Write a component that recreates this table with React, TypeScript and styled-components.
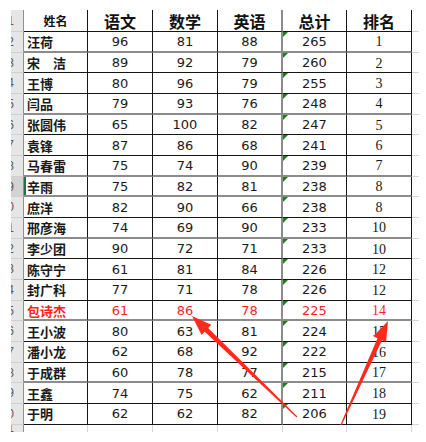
import React from 'react';
import styled, { createGlobalStyle, css } from 'styled-components';

const Global = createGlobalStyle`
  html, body { margin: 0; padding: 0; background: #fff; }
  body { width: 426px; height: 442px; overflow: hidden; }
`;

type Line = 'dark' | 'gray';

const Page = styled.div`
  position: relative;
  width: 426px;
  height: 442px;
  box-sizing: border-box;
  padding: 10px 0 0 11px;
  background: #fff;
`;

const Sheet = styled.div`
  display: grid;
  grid-template-columns: 13px 64px 65px 65px 65px 64px 65px 7px;
  grid-template-rows: 22px repeat(19, 20.68px) 7px;
`;

const RowHead = styled.div<{ $sel?: boolean; $last?: boolean }>`
  display: flex;
  align-items: center;
  justify-content: flex-end;
  overflow: hidden;
  box-sizing: border-box;
  padding-right: 9px;
  background: ${p => (p.$sel ? '#d3d3d3' : '#e6e6e6')};
  border-right: 1px solid #8f8f8f;
  border-bottom: ${p => (p.$last ? 'none' : '1px solid #cfcfcf')};
  font-family: "Liberation Sans", sans-serif;
  font-size: 12px;
  color: #5a5a5a;
  white-space: nowrap;
`;

const Cell = styled.div<{ $line: Line; $vline?: Line; $red?: boolean }>`
  position: relative;
  display: flex;
  align-items: center;
  justify-content: center;
  box-sizing: border-box;
  border-bottom: ${p => (p.$line === 'gray' ? '2px solid #8c8c8c' : '1px solid #161616')};
  border-right: ${p => (p.$vline === 'gray' ? '2px solid #8c8c8c' : '1px solid #161616')};
  color: ${p => (p.$red ? '#ff1f1f' : '#1a1a1a')};
  font-family: "DejaVu Sans", sans-serif;
  font-size: 13px;
  white-space: nowrap;
`;

const HeadCell = styled(Cell)<{ $small?: boolean }>`
  font-family: "Noto Sans CJK SC", sans-serif;
  font-weight: 700;
  font-size: ${p => (p.$small ? '12px' : '16px')};
  color: #111;
`;

const NameCell = styled(Cell)<{ $sel?: boolean }>`
  justify-content: flex-start;
  padding-left: 3px;
  font-family: "Noto Sans CJK SC", sans-serif;
  font-weight: 700;
  font-size: 13px;
  ${p =>
    p.$sel &&
    css`
      box-shadow: inset 2px 0 0 #217346;
    `}
`;

const TotalCell = styled(Cell)`
  &::before {
    content: '';
    position: absolute;
    top: 0;
    left: 0;
    border-top: 5px solid #1b7f1b;
    border-right: 5px solid transparent;
  }
`;

const RankCell = styled(Cell)`
  font-family: "Liberation Serif", serif;
  font-size: 14px;
  padding-top: 2px;
`;

const Spare = styled.div<{ $bottom?: boolean; $right?: boolean }>`
  box-sizing: border-box;
  border-bottom: ${p => (p.$bottom ? '1px solid #d6d6d6' : 'none')};
  border-right: ${p => (p.$right ? '1px solid #d6d6d6' : 'none')};
`;

const Overlay = styled.svg`
  position: absolute;
  left: 0;
  top: 0;
  pointer-events: none;
`;

type Row = { name: string; s: [number, number, number]; total: number; rank: number; line: Line; red?: boolean; sel?: boolean };

const rows: Row[] = [
  { name: '汪荷', s: [96, 81, 88], total: 265, rank: 1, line: 'gray' },
  { name: '宋　洁', s: [89, 92, 79], total: 260, rank: 2, line: 'dark' },
  { name: '王博', s: [80, 96, 79], total: 255, rank: 3, line: 'dark' },
  { name: '闫品', s: [79, 93, 76], total: 248, rank: 4, line: 'gray' },
  { name: '张圆伟', s: [65, 100, 82], total: 247, rank: 5, line: 'dark' },
  { name: '袁锋', s: [87, 86, 68], total: 241, rank: 6, line: 'dark' },
  { name: '马春雷', s: [75, 74, 90], total: 239, rank: 7, line: 'gray' },
  { name: '辛雨', s: [75, 82, 81], total: 238, rank: 8, line: 'gray', sel: true },
  { name: '庶洋', s: [82, 90, 66], total: 238, rank: 8, line: 'dark' },
  { name: '邢彦海', s: [74, 69, 90], total: 233, rank: 10, line: 'gray' },
  { name: '李少团', s: [90, 72, 71], total: 233, rank: 10, line: 'dark' },
  { name: '陈守宁', s: [61, 81, 84], total: 226, rank: 12, line: 'dark' },
  { name: '封广科', s: [77, 71, 78], total: 226, rank: 12, line: 'dark' },
  { name: '包诗杰', s: [61, 86, 78], total: 225, rank: 14, line: 'gray', red: true },
  { name: '王小波', s: [80, 63, 81], total: 224, rank: 15, line: 'dark' },
  { name: '潘小龙', s: [62, 68, 92], total: 222, rank: 16, line: 'dark' },
  { name: '于成群', s: [60, 78, 77], total: 215, rank: 17, line: 'gray' },
  { name: '王鑫', s: [74, 75, 62], total: 211, rank: 18, line: 'dark' },
  { name: '于明', s: [62, 62, 82], total: 206, rank: 19, line: 'dark' },
];

const headers = ['语文', '数学', '英语', '总计', '排名'];

export default function App() {
  return (
    <Page>
      <Global />
      <Sheet>
        <RowHead>1</RowHead>
        <HeadCell $line="dark" $small>姓名</HeadCell>
        {headers.map((h, i) => (
          <HeadCell key={h} $line="dark" $vline={i === 2 ? 'gray' : 'dark'}>
            {h}
          </HeadCell>
        ))}
        <Spare $bottom />

        {rows.map((r, idx) => (
          <React.Fragment key={r.name + idx}>
            <RowHead $sel={r.sel}>{idx + 2}</RowHead>
            <NameCell $line={r.line} $red={r.red} $sel={r.sel}>{r.name}</NameCell>
            <Cell $line={r.line} $red={r.red}>{r.s[0]}</Cell>
            <Cell $line={r.line} $red={r.red}>{r.s[1]}</Cell>
            <Cell $line={r.line} $vline="gray" $red={r.red}>{r.s[2]}</Cell>
            <TotalCell $line={r.line} $red={r.red}>{r.total}</TotalCell>
            <RankCell $line={r.line} $red={r.red}>{r.rank}</RankCell>
            <Spare $bottom />
          </React.Fragment>
        ))}

        <RowHead $last>21</RowHead>
        {[0, 1, 2, 3, 4, 5].map(i => (
          <Spare key={i} $right />
        ))}
        <Spare />
      </Sheet>

      <Overlay width={426} height={442} viewBox="0 0 426 442">
        <polygon
          fill="#ff2a1c"
          points="192,316 211.25,324.82 208.13,328.06 297.4,416.6 296.6,417.4 204.67,331.66 201.55,334.9"
        />
        <polygon
          fill="#ff2a1c"
          points="388,321 386.14,342.1 382.04,340.25 341.55,425.25 340.45,424.75 377.48,338.19 373.38,336.34"
        />
      </Overlay>
    </Page>
  );
}
